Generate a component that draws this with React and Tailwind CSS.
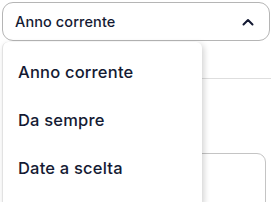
import React from "react";

const options = ["Anno corrente", "Da sempre", "Date a scelta"];

export default function App() {
  return (
    <div
      className="relative w-[273px] h-[202px] overflow-hidden bg-white text-[#141a33]"
      style={{ fontFamily: "Inter, 'Noto Sans', sans-serif" }}
    >
      <div className="px-[2px] pt-[2px]">
        <button className="w-[268px] h-[39px] flex items-center justify-between pl-[12px] pr-[15px] border border-[#b5b5b5] rounded-[11px] bg-white">
          <span className="text-[14.5px] font-medium tracking-[0.1px]">Anno corrente</span>
          <svg width="12" height="8" viewBox="0 0 12 8" fill="none">
            <path d="M1.5 6.5 6 2l4.5 4.5" stroke="#141a33" strokeWidth="2" strokeLinecap="round" strokeLinejoin="round" />
          </svg>
        </button>
        <div className="mt-[37px] border-t border-[#dedede]" />
        <div className="mt-[74px] ml-[40px] mr-[5px] h-[60px] border border-[#c4c4c4] rounded-[9px]" />
      </div>

      <div className="absolute left-[2px] top-[42px] w-[200px] h-[165px] bg-white rounded-[6px] border-l border-[#e2e2e2] shadow-[2px_2px_6px_rgba(0,0,0,0.18)] py-[6px]">
        {options.map((o) => (
          <div key={o} className="h-[48px] flex items-center pl-[15px] text-[16.5px] font-medium tracking-[0.2px]">
            {o}
          </div>
        ))}
      </div>
    </div>
  );
}
